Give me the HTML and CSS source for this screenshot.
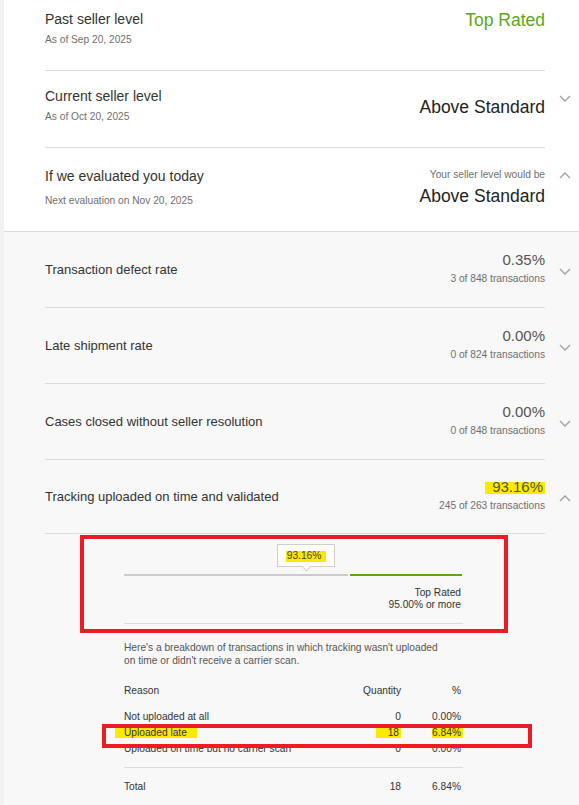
FILE: index.html
```html
<!DOCTYPE html>
<html lang="en">
<head>
<meta charset="utf-8">
<title>Seller level</title>
<link rel="stylesheet" href="styles.css">
</head>
<body>
<div class="screen">
  <div class="page">
    <section class="levels">
      <div class="row r1">
        <div class="row-main div">
          <div class="lbl-block">
            <div class="lbl">Past seller level</div>
            <div class="sub">As of Sep 20, 2025</div>
          </div>
          <div class="level green">Top Rated</div>
        </div>
        <div class="chev"></div>
      </div>
      <div class="row r2">
        <div class="row-main div">
          <div class="lbl-block">
            <div class="lbl">Current seller level</div>
            <div class="sub">As of Oct 20, 2025</div>
          </div>
          <div class="level">Above Standard</div>
        </div>
        <div class="chev"><svg width="12" height="7" viewBox="0 0 12 7"><path d="M1 1l5 5 5-5" fill="none" stroke="#a0a0a0" stroke-width="1.3"/></svg></div>
      </div>
      <div class="row r3">
        <div class="row-main">
          <div class="lbl-block">
            <div class="lbl">If we evaluated you today</div>
            <div class="sub">Next evaluation on Nov 20, 2025</div>
          </div>
          <div class="right-block">
            <div class="sub">Your seller level would be</div>
            <div class="level">Above Standard</div>
          </div>
        </div>
        <div class="chev"><svg width="12" height="7" viewBox="0 0 12 7"><path d="M1 6l5-5 5 5" fill="none" stroke="#a0a0a0" stroke-width="1.3"/></svg></div>
      </div>
    </section>

    <section class="metrics">
      <div class="mrow">
        <div class="mrow-main">
          <div class="mlbl">Transaction defect rate</div>
          <div class="vblock">
            <div class="mval">0.35%</div>
            <div class="msub">3 of 848 transactions</div>
          </div>
        </div>
        <div class="mchev"><svg width="12" height="7" viewBox="0 0 12 7"><path d="M1 1l5 5 5-5" fill="none" stroke="#a0a0a0" stroke-width="1.3"/></svg></div>
      </div>
      <div class="mrow">
        <div class="mrow-main">
          <div class="mlbl">Late shipment rate</div>
          <div class="vblock">
            <div class="mval">0.00%</div>
            <div class="msub">0 of 824 transactions</div>
          </div>
        </div>
        <div class="mchev"><svg width="12" height="7" viewBox="0 0 12 7"><path d="M1 1l5 5 5-5" fill="none" stroke="#a0a0a0" stroke-width="1.3"/></svg></div>
      </div>
      <div class="mrow">
        <div class="mrow-main">
          <div class="mlbl">Cases closed without seller resolution</div>
          <div class="vblock">
            <div class="mval">0.00%</div>
            <div class="msub">0 of 848 transactions</div>
          </div>
        </div>
        <div class="mchev"><svg width="12" height="7" viewBox="0 0 12 7"><path d="M1 1l5 5 5-5" fill="none" stroke="#a0a0a0" stroke-width="1.3"/></svg></div>
      </div>
      <div class="mrow last">
        <div class="mrow-main">
          <div class="mlbl">Tracking uploaded on time and validated</div>
          <div class="vblock">
            <div class="mval"><span class="mark mark-val">93.16%</span></div>
            <div class="msub">245 of 263 transactions</div>
          </div>
        </div>
        <div class="mchev"><svg width="12" height="7" viewBox="0 0 12 7"><path d="M1 6l5-5 5 5" fill="none" stroke="#a0a0a0" stroke-width="1.3"/></svg></div>
      </div>

      <div class="detail">
        <div class="chart">
          <div class="tip-area">
            <div class="tip"><span class="mark mark-tip">93.16%</span></div>
          </div>
          <div class="bar"><div class="seg-gray"></div><div class="seg-green"></div></div>
          <div class="target">
            <div>Top Rated</div>
            <div>95.00% or more</div>
          </div>
        </div>
        <p class="expl">Here's a breakdown of transactions in which tracking wasn't uploaded on time or didn't receive a carrier scan.</p>
        <div class="table">
          <div class="trow thead"><span>Reason</span><span class="num">Quantity</span><span class="num">%</span></div>
          <div class="tbody">
            <div class="trow"><span>Not uploaded at all</span><span class="num">0</span><span class="num">0.00%</span></div>
            <div class="trow"><span><span class="mark mark-reason">Uploaded late</span></span><span class="num"><span class="mark mark-qty">18</span></span><span class="num"><span class="mark mark-pct">6.84%</span></span></div>
            <div class="trow"><span>Uploaded on time but no carrier scan</span><span class="num">0</span><span class="num">0.00%</span></div>
          </div>
          <div class="trow ttotal"><span>Total</span><span class="num">18</span><span class="num">6.84%</span></div>
        </div>
      </div>
    </section>
  </div>

  <div class="annot annot-chart"></div>
  <div class="annot annot-row"></div>
</div>
</body>
</html>
```

FILE: styles.css
```css
* { box-sizing: border-box; }
html, body { margin: 0; padding: 0; }
body {
  background: #f8f8f8;
  font-family: "Liberation Sans", Arial, sans-serif;
  color: #333;
}
.screen {
  position: relative;
  width: 579px;
  min-height: 805px;
  background: #f1f1f1;
  overflow: hidden;
}
.page {
  margin-left: 4px;
  min-height: 805px;
  background: #f8f8f8;
}

/* ---- seller level rows ---- */
.levels {
  background: #fff;
  border-bottom: 1px solid #dcdcdc;
}
.row {
  display: flex;
  padding-left: 41px;
}
.row-main {
  flex: 0 0 500px;
  width: 500px;
  display: flex;
  justify-content: space-between;
  align-items: flex-start;
}
.row-main.div { border-bottom: 1px solid #dcdcdc; }
.chev {
  flex: 0 0 34px;
  display: flex;
  justify-content: flex-start;
  padding-left: 14px;
}
.chev svg, .mchev svg { display: block; }

.lbl {
  font-size: 14px;
  line-height: 17px;
  color: #333;
}
.sub {
  font-size: 10.2px;
  line-height: 12px;
  color: #6f6f6f;
}
.level {
  font-size: 17.5px;
  line-height: 21px;
  color: #222;
}
.level.green { color: #5ba71b; }

.r1 .row-main { height: 71px; }
.r1 .lbl-block { padding-top: 11px; }
.r1 .sub { margin-top: 6px; }
.r1 .level { padding-top: 10px; }

.r2 .row-main { height: 77px; }
.r2 .lbl-block { padding-top: 17px; }
.r2 .sub { margin-top: 6px; }
.r2 .level { padding-top: 26px; }
.r2 .chev { padding-top: 24px; }

.r3 .row-main { height: 83px; }
.r3 .lbl-block { padding-top: 20px; }
.r3 .lbl-block .sub { margin-top: 10px; }
.r3 .right-block { padding-top: 21px; text-align: right; }
.r3 .right-block .level { margin-top: 5px; }
.r3 .chev { padding-top: 24px; }

/* ---- metric rows ---- */
.mrow {
  display: flex;
  padding-left: 41px;
}
.mrow-main {
  flex: 0 0 500px;
  width: 500px;
  height: 76px;
  border-bottom: 1px solid #dcdcdc;
  display: flex;
  justify-content: space-between;
  align-items: center;
}
.mrow.last .mrow-main { height: 74px; }
.mchev {
  flex: 0 0 34px;
  display: flex;
  justify-content: flex-start;
  align-items: center;
  padding-left: 14px;
  padding-top: 2px;
}
.mlbl {
  font-size: 13px;
  line-height: 16px;
  color: #333;
}
.vblock {
  text-align: right;
  padding-bottom: 3px;
}
.mval {
  font-size: 15px;
  line-height: 18px;
  color: #555;
}
.msub {
  margin-top: 3px;
  font-size: 10.2px;
  line-height: 13px;
  color: #6f6f6f;
}

/* ---- highlighter marks ---- */
.mark {
  background-image: linear-gradient(#fbe900, #fbe900);
  background-repeat: no-repeat;
  background-position: 0 55%;
}
.mark-val {
  padding: 0 2px 0 7px;
  background-size: 100% 12px;
  background-position: 0 75%;
}
.mark-tip {
  display: inline-block;
  padding: 0 5px 0 1px;
  background-size: 100% 11px;
  background-position: 0 60%;
}
.mark-reason {
  display: inline-block;
  margin-left: -9px;
  padding: 0 10px 0 9px;
  background-size: 100% 11px;
  background-position: 0 30%;
}
.mark-qty {
  display: inline-block;
  padding: 0 2px 0 12px;
  background-size: 100% 11px;
  background-position: 0 30%;
}
.mark-pct {
  display: inline-block;
  margin-right: -2px;
  padding: 0 2px 0 0;
  background-size: 100% 11px;
  background-position: 0 30%;
}

/* ---- detail ---- */
.detail {
  margin-left: 120px;
  width: 339px;
  font-size: 10.2px;
  color: #333;
}
.chart {
  padding-top: 10px;
  padding-bottom: 12px;
  border-bottom: 1px solid #dcdcdc;
}
.tip-area {
  position: relative;
  height: 26px;
}
.tip {
  position: absolute;
  left: 153px;
  top: 0;
  width: 58px;
  height: 23px;
  background: #fff;
  border: 1px solid #cfcfcf;
  text-align: center;
  font-size: 10.2px;
  line-height: 21px;
  color: #444;
}
.tip::after {
  content: "";
  position: absolute;
  left: 25px;
  bottom: -4px;
  width: 6px;
  height: 6px;
  background: #fff;
  border-right: 1px solid #cfcfcf;
  border-bottom: 1px solid #cfcfcf;
  transform: rotate(45deg);
}
.bar {
  display: flex;
  gap: 2px;
  width: 338px;
  height: 2px;
  margin-top: 4px;
}
.seg-gray { width: 224px; background: #cccccc; }
.seg-green { flex: 1; background: #5ba71b; }
.target {
  margin-top: 11px;
  padding-right: 2px;
  text-align: right;
  line-height: 12px;
}
.expl {
  margin: 17px 0 0;
  width: 322px;
  line-height: 13px;
  color: #555;
}
.table { margin-top: 17px; }
.trow {
  display: grid;
  grid-template-columns: 1fr 60px 60px;
  line-height: 16px;
}
.trow .num { text-align: right; padding-right: 2px; }
.thead { line-height: 13px; }
.tbody {
  margin-top: 12px;
  padding-bottom: 10px;
  border-bottom: 1px solid #dcdcdc;
}
.ttotal { margin-top: 11px; }

/* ---- red annotation boxes drawn over the screenshot ---- */
.annot {
  position: absolute;
  border: 4px solid #ed1c24;
}
.annot-chart {
  left: 80px;
  top: 535px;
  width: 428px;
  height: 98px;
}
.annot-row {
  left: 102px;
  top: 724px;
  width: 430px;
  height: 24px;
}
```
